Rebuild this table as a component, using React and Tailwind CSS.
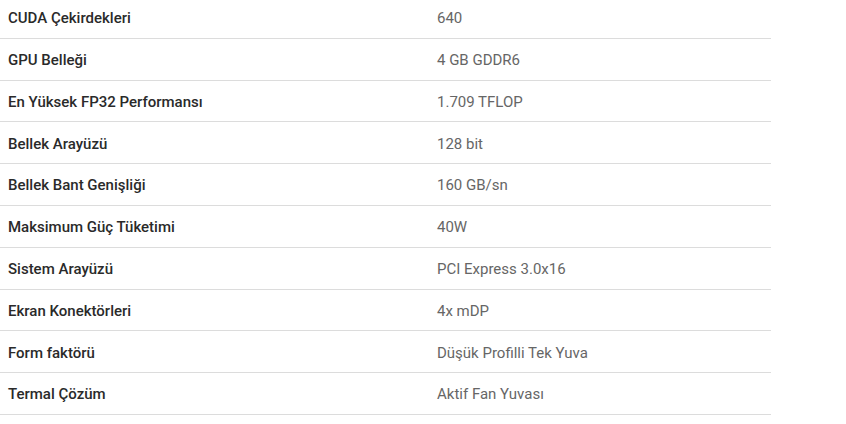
const specs = [
  ['CUDA Çekirdekleri', '640'],
  ['GPU Belleği', '4 GB GDDR6'],
  ['En Yüksek FP32 Performansı', '1.709 TFLOP'],
  ['Bellek Arayüzü', '128 bit'],
  ['Bellek Bant Genişliği', '160 GB/sn'],
  ['Maksimum Güç Tüketimi', '40W'],
  ['Sistem Arayüzü', 'PCI Express 3.0x16'],
  ['Ekran Konektörleri', '4x mDP'],
  ['Form faktörü', 'Düşük Profilli Tek Yuva'],
  ['Termal Çözüm', 'Aktif Fan Yuvası'],
];

export default function App() {
  return (
    <div className="w-[846px] h-[424px] overflow-hidden bg-white font-['Roboto',sans-serif] text-[15px]">
      <div className="w-[771px] -mt-[3px]">
        {specs.map(([label, value]) => (
          <div
            key={label}
            className="flex items-center h-[41.8px] pt-[2px] border-b border-[#dcdcdc] box-border"
          >
            <div className="w-[429px] pl-2 text-[#2a2a2a] font-medium">{label}</div>
            <div className="pl-2 text-[#666666]">{value}</div>
          </div>
        ))}
      </div>
    </div>
  );
}
